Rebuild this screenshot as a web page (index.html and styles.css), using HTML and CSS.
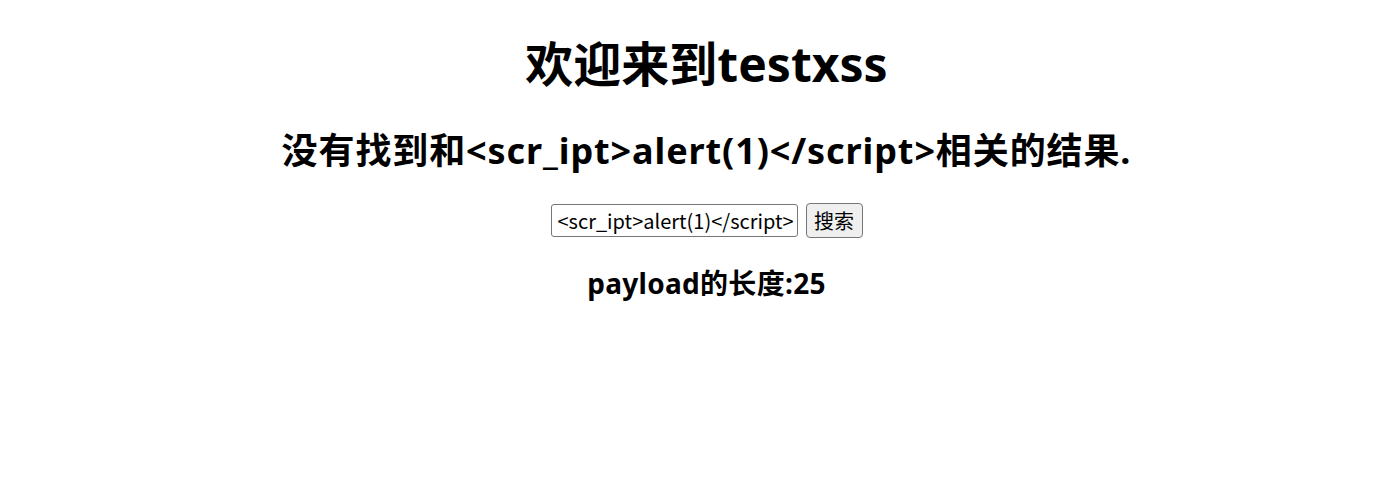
FILE: index.html
```html
<!DOCTYPE html>
<html>
<head>
<meta charset="utf-8">
<title>testxss</title>
<link rel="stylesheet" href="styles.css">
</head>
<body>
<h1 class="title">欢迎来到testxss</h1>
<h2 class="result">没有找到和&lt;scr_ipt&gt;alert(1)&lt;/script&gt;相关的结果.</h2>
<div class="search">
  <form class="search-form" action="#" method="GET">
    <input class="search-input" name="keyword" value="&lt;scr_ipt&gt;alert(1)&lt;/script&gt;">
    <input class="search-btn" type="submit" name="submit" value="搜索">
  </form>
</div>
<h3 class="length">payload的长度:25</h3>
</body>
</html>
```

FILE: styles.css
```css
html, body {
  background: #fff;
}
body {
  margin: 0;
  padding: 0 12px 0 39px;
  font-family: "Noto Sans", "Noto Sans CJK SC", sans-serif;
  color: #000;
  line-height: 1.32;
}
.title {
  font-size: 48px;
  margin: 32px 0;
  text-align: center;
  font-weight: bold;
}
.result {
  font-size: 36px;
  margin: 30px 0 28px;
  text-align: center;
  font-weight: bold;
  letter-spacing: 0.9px;
}
.search {
  text-align: center;
}
.search-form {
  display: flex;
  justify-content: center;
  align-items: center;
  gap: 8px;
  margin: 0;
}
.search-input {
  font-family: "Noto Sans CJK SC", sans-serif;
  font-size: 20px;
  width: 247px;
  height: 33px;
  box-sizing: border-box;
  border: 1px solid #767676;
  border-radius: 3px;
  padding: 0 3px 0 6px;
  color: #000;
  background: #fff;
  line-height: 31px;
}
.search-btn {
  font-family: "Noto Sans CJK SC", sans-serif;
  font-size: 20px;
  width: 57px;
  height: 35px;
  box-sizing: border-box;
  border: 1px solid #767676;
  border-radius: 4px;
  background: #efefef;
  color: #000;
  padding: 0;
}
.length {
  font-size: 28px;
  margin: 27px 0;
  text-align: center;
  font-weight: bold;
  letter-spacing: 0.3px;
}
```
